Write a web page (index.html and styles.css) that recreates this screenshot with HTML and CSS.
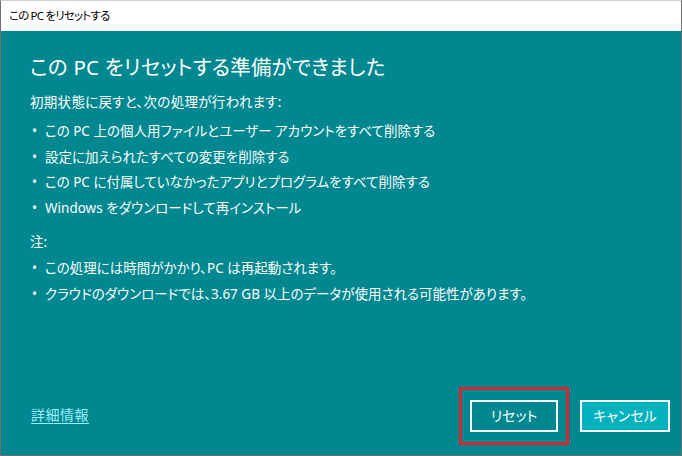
FILE: index.html
```html
<!DOCTYPE html>
<html lang="ja">
<head>
<meta charset="utf-8">
<link rel="stylesheet" href="styles.css">
</head>
<body>
<div class="window">
  <div class="titlebar">この PC をリセットする</div>
  <div class="content">
    <h1 class="heading">この PC をリセットする準備ができました</h1>
    <p class="intro">初期状態に戻すと、次の処理が行われます:</p>
    <ul class="list list-first">
      <li>この PC 上の個人用ファイルとユーザー アカウントをすべて削除する</li>
      <li>設定に加えられたすべての変更を削除する</li>
      <li>この PC に付属していなかったアプリとプログラムをすべて削除する</li>
      <li>Windows をダウンロードして再インストール</li>
    </ul>
    <p class="note">注:</p>
    <ul class="list list-note">
      <li>この処理には時間がかかり、PC は再起動されます。</li>
      <li>クラウドのダウンロードでは、3.67 GB 以上のデータが使用される可能性があります。</li>
    </ul>
    <div class="footer">
      <a class="more" href="#">詳細情報</a>
      <div class="buttons">
        <span class="highlight"><button class="btn btn-reset">リセット</button></span>
        <button class="btn btn-cancel">キャンセル</button>
      </div>
    </div>
  </div>
</div>
</body>
</html>
```

FILE: styles.css
```css
* { box-sizing: border-box; }
html, body { margin: 0; padding: 0; }
body {
  width: 682px;
  height: 456px;
  overflow: hidden;
  font-family: "Noto Sans", "Noto Sans CJK JP", sans-serif;
  font-feature-settings: "palt" 1;
  background: #ffffff;
}
.window {
  width: 682px;
  height: 456px;
  display: flex;
  flex-direction: column;
  border-left: 1px solid #6f6f6f;
  border-right: 1px solid #6f6f6f;
  border-bottom: 1px solid #6f6f6f;
  border-top: 1px solid #d0d0d0;
}
.titlebar {
  height: 30px;
  flex: none;
  background: #ffffff;
  color: #000;
  font-size: 11.5px;
  line-height: 30px;
  padding-left: 8px;
  letter-spacing: -0.8px;
}
.content {
  flex: 1;
  background: #00878f;
  color: #ffffff;
  display: flex;
  flex-direction: column;
  padding: 21px 11px 23px 29px;
}
.heading {
  margin: 0;
  font-weight: normal;
  font-size: 20.5px;
  line-height: 30px;
  letter-spacing: 0.2px;
}
.intro, .note {
  margin: 0;
  font-size: 13.5px;
  line-height: 25px;
}
.intro { margin-top: 8px; letter-spacing: 0.3px; }
.list {
  margin: 0;
  padding: 0;
  list-style: none;
  font-size: 13.5px;
  line-height: 25.5px;
}
.list li {
  position: relative;
  padding-left: 15px;
}
.list li::before {
  content: "•";
  position: absolute;
  left: 2px;
  top: 0;
}
.list-first { margin-top: 4px; }
.note { margin-top: 9px; }
.list-note { margin-top: 1px; }
.footer {
  margin-top: auto;
  display: flex;
  align-items: center;
  justify-content: space-between;
}
.more {
  color: #9befff;
  font-size: 14px;
  text-decoration: underline;
  text-underline-offset: 3px;
  margin-left: 1px;
  margin-bottom: 5px;
  letter-spacing: 0.5px;
}
.buttons {
  display: flex;
  gap: 22px;
}
.highlight {
  position: relative;
  display: block;
}
.highlight::after {
  content: "";
  position: absolute;
  left: -11px;
  right: -11px;
  top: -13px;
  bottom: -13px;
  border: 3px solid #d3272e;
}
.btn {
  display: block;
  height: 32px;
  border: 2px solid #ffffff;
  color: #ffffff;
  font-family: "Noto Sans", "Noto Sans CJK JP", sans-serif;
  font-feature-settings: "palt" 1;
  font-size: 14px;
  padding: 0;
  line-height: 28px;
}
.btn-reset {
  width: 88px;
  background: #00878f;
}
.btn-cancel {
  width: 90px;
  background: #00b2bd;
}
```
